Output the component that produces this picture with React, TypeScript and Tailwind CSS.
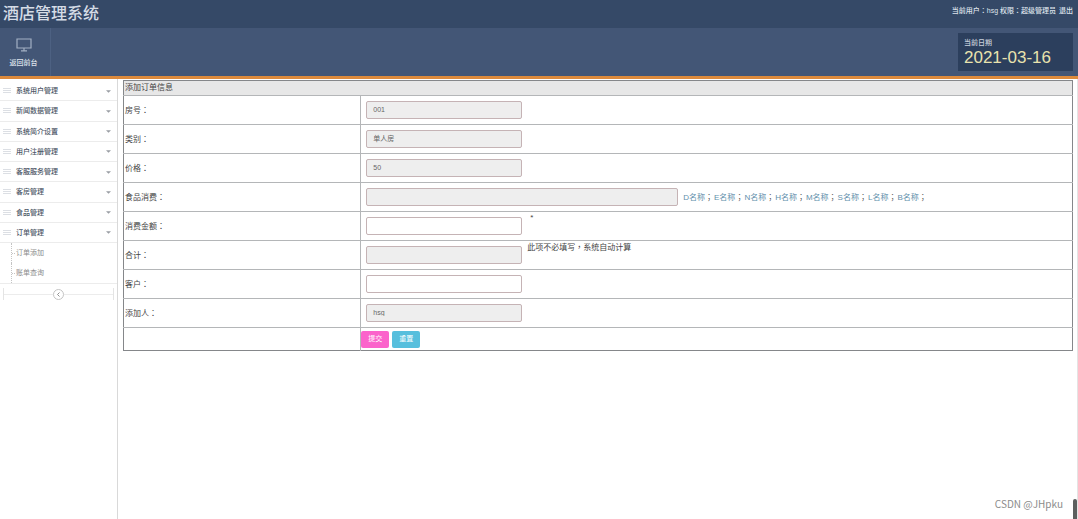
import React from "react";

const menus = [
  "系统用户管理",
  "新闻数据管理",
  "系统简介设置",
  "用户注册管理",
  "客服服务管理",
  "客房管理",
  "食品管理",
  "订单管理",
];

const foods = ["D名称", "E名称", "N名称", "H名称", "M名称", "S名称", "L名称", "B名称"];

type Field = {
  id: string;
  label: string;
  value?: string;
  readOnly?: boolean;
  wide?: boolean;
  extra?: React.ReactNode;
};

/* Full-width punctuation set in the middle of its cell. */
function Mark({ children }: { children: string }) {
  return <span className="font-['Noto_Sans_CJK_TC',sans-serif]">{children}</span>;
}

const fields: Field[] = [
  { id: "room", label: "房号", value: "001", readOnly: true },
  { id: "kind", label: "类别", value: "单人房", readOnly: true },
  { id: "price", label: "价格", value: "50", readOnly: true },
  {
    id: "food",
    label: "食品消费",
    readOnly: true,
    wide: true,
    extra: (
      <span className="flex gap-px self-center text-[#555]">
        {foods.map((f) => (
          <span key={f}>
            <a href="#" className="text-[#5f8fab]">
              {f}
            </a>
            <Mark>；</Mark>
          </span>
        ))}
      </span>
    ),
  },
  { id: "amount", label: "消费金额", extra: <span className="pl-[3px]">*</span> },
  {
    id: "total",
    label: "合计",
    readOnly: true,
    extra: (
      <span>
        此项不必填写<Mark>，</Mark>系统自动计算
      </span>
    ),
  },
  { id: "customer", label: "客户" },
  { id: "author", label: "添加人", value: "hsg", readOnly: true },
];

function FieldRow({ id, label, value, readOnly, wide, extra }: Field) {
  return (
    <tr className="h-[29px]">
      <th scope="row" className="border-t border-r border-[#b4b6b8] p-0 pl-px text-left font-normal">
        <label htmlFor={id}>
          {label}
          <Mark>：</Mark>
        </label>
      </th>
      <td className="border-t border-[#b4b6b8] p-0">
        <div className="flex h-7 items-start gap-[5px] pl-[5px]">
          <input
            id={id}
            defaultValue={value}
            readOnly={readOnly}
            className={
              "h-[18px] self-center rounded-[2px] border border-[#c5b3b5] px-1.5 pb-0.5 text-[7px] leading-[14px] text-[#666] outline-none " +
              (readOnly ? "bg-[#eeeeee] " : "bg-white ") +
              (wide ? "w-[312px]" : "w-[156px]")
            }
          />
          {extra}
        </div>
      </td>
    </tr>
  );
}

function Sidebar() {
  return (
    <nav className="w-[118px] shrink-0 border-r border-[#d9d9d9] pt-0.5 text-[7px] leading-[10px]">
      <ul className="grid h-[162px] grid-rows-8">
        {menus.map((m) => (
          <li key={m} className="flex border-b border-[#ececec]">
            <a href="#" className="flex w-full items-center pt-px pr-1.5 pl-[3px] font-medium text-[#4c5666]">
              <svg viewBox="0 0 8 6" className="mr-[5px] h-1.5 w-2" stroke="#dcdfe4" strokeWidth="1">
                <path d="M0 .5h8M0 2.5h8M0 4.5h8" />
              </svg>
              <span className="grow">{m}</span>
              <svg viewBox="0 0 5 3" className="h-[3px] w-[5px]" fill="#9a9ea4">
                <path d="M0 .3h5L2.5 2.8z" />
              </svg>
            </a>
          </li>
        ))}
      </ul>
      <ul className="border-b border-[#ececec] pl-[11px]">
        {["订单添加", "账单查询"].map((s) => (
          <li key={s} className="flex h-5 items-center border-l border-dotted border-[#c4c4c4]">
            <span className="mr-px w-[3px] border-t border-dotted border-[#c4c4c4]" />
            <a href="#" className="text-[#8c8c8c]">
              {s}
            </a>
          </li>
        ))}
      </ul>
      <div className="mx-[3px] mt-1 flex h-3 items-center border-x border-[#e4e4e4]">
        <span className="grow border-t border-[#ececec]" />
        <button
          type="button"
          aria-label="收起"
          className="flex size-[11px] items-center justify-center rounded-full border border-[#c4c4c4] bg-white"
        >
          <svg viewBox="0 0 5 5" className="size-[5px]" fill="none" stroke="#8f8f8f">
            <path d="M3.5.5l-2 2 2 2" />
          </svg>
        </button>
        <span className="grow border-t border-[#ececec]" />
      </div>
    </nav>
  );
}

export default function App() {
  return (
    <div className="relative flex min-h-screen flex-col bg-white font-['Liberation_Sans','Noto_Sans_CJK_SC',sans-serif]">
      <header className="border-b-[3px] border-[#dd8a3c]">
        <div className="flex h-7 items-start justify-between bg-[#354967] pr-[5px] pl-[3px]">
          <h1 className="pt-0.5 text-[16px] leading-6 font-medium text-[#d5dce6]">酒店管理系统</h1>
          <p className="pt-[5px] text-[7px] leading-[10px] font-medium text-[#dfe4ec]">
            当前用户<Mark>：</Mark>hsg 权限<Mark>：</Mark>超级管理员{" "}
            <a href="#" className="ml-px">
              退出
            </a>
          </p>
        </div>
        <div className="flex h-12 justify-between bg-[#435676] pr-[5px]">
          <a
            href="#"
            className="flex w-[51px] flex-col items-center border-r border-[#4d6182] pt-2.5 pr-[3px] text-[7px] leading-[10px] font-medium text-[#dfe4ec]"
          >
            <svg viewBox="0 0 16 14" className="mb-1.5 h-3.5 w-4" fill="none" stroke="#a3b0c3">
              <path d="M1 1h14v9H1zM8 10v2.5M5 12.8h6" strokeWidth="1.2" />
            </svg>
            返回前台
          </a>
          <div className="mt-[5px] h-[38px] w-[115px] bg-[#2c3f5d] pt-[5px] pl-1.5">
            <p className="text-[7px] leading-[10px] font-medium text-[#c9d1dc]">当前日期</p>
            <p className="text-[17px] leading-5 text-[#e9e3ae]">2021-03-16</p>
          </div>
        </div>
      </header>

      <div className="flex grow">
        <Sidebar />
        <main className="min-w-0 grow border-r border-[#e4e4e4] pt-px pr-1 pl-[5px]">
          <form onSubmit={(e) => e.preventDefault()}>
            <table className="w-full table-fixed border-collapse border border-[#85878a] text-[8px] leading-3 text-[#444]">
              <colgroup>
                <col className="w-1/4" />
                <col />
              </colgroup>
              <thead>
                <tr className="h-[15px]">
                  <th colSpan={2} className="bg-[#e7e7e7] p-0 pl-px text-left font-normal">
                    添加订单信息
                  </th>
                </tr>
              </thead>
              <tbody>
                {fields.map((f) => (
                  <FieldRow key={f.id} {...f} />
                ))}
                <tr className="h-[23px]">
                  <td className="border-t border-r border-[#b4b6b8] p-0" />
                  <td className="border-t border-[#b4b6b8] p-0">
                    <div className="flex gap-[3px] text-[7px] leading-[10px] text-white">
                      <button type="submit" className="h-[17px] w-7 rounded-[2px] bg-[#fb63cb] pb-px">
                        提交
                      </button>
                      <button type="reset" className="h-[17px] w-7 rounded-[2px] bg-[#57bfdd] pb-px">
                        重置
                      </button>
                    </div>
                  </td>
                </tr>
              </tbody>
            </table>
          </form>
        </main>
      </div>

      <p className="absolute right-[15px] bottom-2 font-['Noto_Sans_CJK_SC',sans-serif] text-[10px] leading-[14px] text-[#8b8b8b]">
        CSDN @JHpku
      </p>
      <div className="absolute right-px bottom-0 h-5 w-1 rounded-t-[2px] bg-[#5c5f5e]" />
    </div>
  );
}
